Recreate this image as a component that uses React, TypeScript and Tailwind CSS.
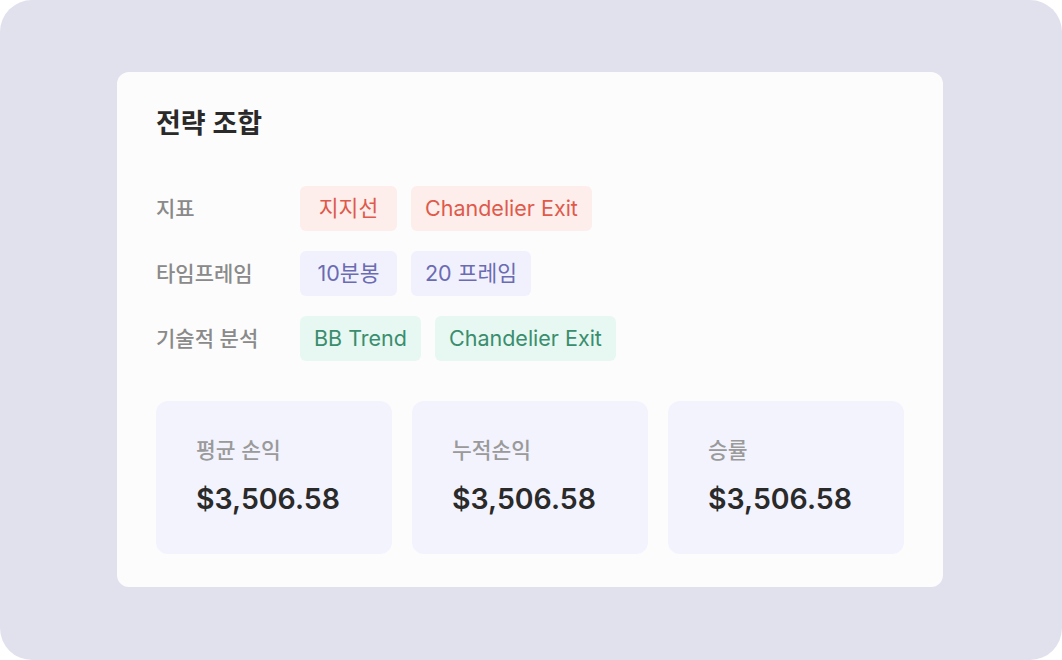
const font = { fontFamily: 'Inter, "Noto Sans CJK KR", "Noto Sans", sans-serif' };

type Tone = "red" | "indigo" | "green";

const toneClass: Record<Tone, string> = {
  red: "bg-[#fdeeec] text-[#df5a4b]",
  indigo: "bg-[#f1f1fd] text-[#6b6bb3]",
  green: "bg-[#e6f8f1] text-[#3a8d6e]",
};

const rows: { label: string; tone: Tone; tags: string[] }[] = [
  { label: "지표", tone: "red", tags: ["지지선", "Chandelier Exit"] },
  { label: "타임프레임", tone: "indigo", tags: ["10분봉", "20 프레임"] },
  { label: "기술적 분석", tone: "green", tags: ["BB Trend", "Chandelier Exit"] },
];

const stats = [
  { label: "평균 손익", value: "$3,506.58" },
  { label: "누적손익", value: "$3,506.58" },
  { label: "승률", value: "$3,506.58" },
];

function Tag({ text, tone }: { text: string; tone: Tone }) {
  return (
    <span
      className={`flex h-[45px] min-w-[97px] items-center justify-center rounded-md px-[14px] text-[21.5px] leading-none ${toneClass[tone]}`}
    >
      {text}
    </span>
  );
}

function StatCard({ label, value }: { label: string; value: string }) {
  return (
    <div className="h-[153px] rounded-xl bg-[#f3f3fe] pl-[40px] pt-[35px]">
      <div className="text-[21.5px] font-medium leading-[28px] text-[#9a9a9a]">{label}</div>
      <div className="mt-[17px] text-[28.5px] font-semibold leading-[36px] text-[#2a2a2a]">
        {value}
      </div>
    </div>
  );
}

export default function App() {
  return (
    <div
      className="h-[660px] w-[1062px] rounded-[32px] bg-[#e1e1ed] pl-[117px] pt-[72px]"
      style={font}
    >
      <div className="w-[826px] rounded-xl bg-[#fcfcfc] px-[39px] pb-[33px] pt-[36px]">
        <h1 className="text-[27px] font-semibold leading-[32px] text-[#2a2a2a]">전략 조합</h1>

        <div className="mt-[46px] flex flex-col gap-5">
          {rows.map((row) => (
            <div key={row.label} className="flex items-center">
              <div className="w-[144px] text-[21px] font-medium text-[#8a8a8a]">{row.label}</div>
              <div className="flex gap-[14px]">
                {row.tags.map((tag) => (
                  <Tag key={tag} text={tag} tone={row.tone} />
                ))}
              </div>
            </div>
          ))}
        </div>

        <div className="mt-[40px] grid grid-cols-3 gap-5">
          {stats.map((s) => (
            <StatCard key={s.label} label={s.label} value={s.value} />
          ))}
        </div>
      </div>
    </div>
  );
}
